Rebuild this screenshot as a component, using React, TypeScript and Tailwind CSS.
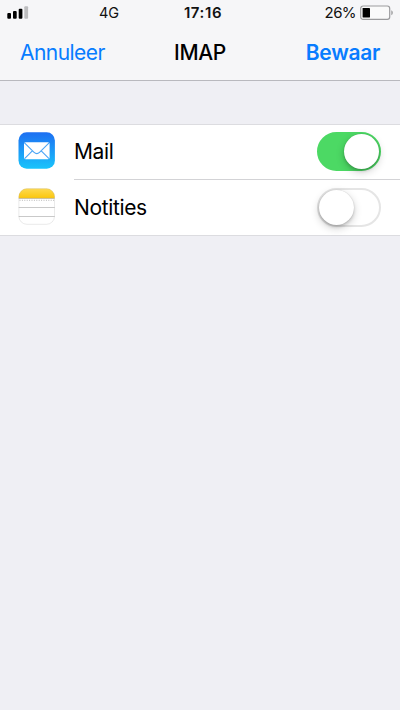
import React from "react";

function StatusBar() {
  return (
    <div className="grid h-[26px] grid-cols-3 items-center text-[15px] leading-[26px] text-[#111]">
      <div className="flex items-center pl-[7px]">
        <svg width="22" height="26" viewBox="0 0 22 26">
          <rect x="0.3" y="12.9" width="3.7" height="5.9" rx="1" fill="#000" />
          <rect x="6" y="11" width="3.7" height="7.8" rx="1" fill="#000" />
          <rect x="11.7" y="8.7" width="3.7" height="10.1" rx="1" fill="#000" />
          <rect x="17.3" y="6.2" width="3.8" height="12.6" rx="1" fill="#bcbcbe" />
        </svg>
        <span className="ml-[70px] text-[14.5px] tracking-[-0.2px]">4G</span>
      </div>
      <span className="pl-[6px] text-center font-semibold tracking-[0.6px]">17:16</span>
      <div className="flex items-center justify-end pr-[6px]">
        <span className="mr-[4px] tracking-[-0.6px]">26%</span>
        <svg width="34" height="26" viewBox="0 0 34 26">
          <rect x="0.7" y="6" width="29" height="13.3" rx="2.4" fill="#fafafa" stroke="#9b9b9d" strokeWidth="1.2" />
          <rect x="2.6" y="8" width="7.4" height="9.4" rx="0.4" fill="#000" />
          <path d="M31.3 10.3c2 .8 2 4.1 0 4.9z" fill="#9b9b9d" />
        </svg>
      </div>
    </div>
  );
}

function MailIcon() {
  return (
    <svg className="mb-[4px]" width="37" height="37" viewBox="0 0 37 37">
      <defs>
        <linearGradient id="mail" x1="0" y1="0" x2="0" y2="1">
          <stop offset="0" stopColor="#1d6ff2" />
          <stop offset="1" stopColor="#19c4fb" />
        </linearGradient>
      </defs>
      <rect x="0.5" y="0.3" width="36.4" height="36.4" rx="8.2" fill="url(#mail)" />
      <rect x="6" y="10.2" width="25.6" height="17" rx="1.6" fill="#fff" />
      <path d="M6.5 10.8l9.6 9.5q2.7 2.6 5.4 0l9.6-9.5M6.6 26.7l8-8M31 26.7l-8-8" fill="none" stroke="#4ba5f5" strokeWidth="1.1" />
    </svg>
  );
}

function NotesIcon() {
  return (
    <svg className="mb-[3px]" width="37" height="37" viewBox="0 0 37 37">
      <defs>
        <linearGradient id="notes" x1="0" y1="0" x2="0" y2="1">
          <stop offset="0" stopColor="#fedb55" />
          <stop offset="1" stopColor="#fbc70e" />
        </linearGradient>
        <clipPath id="tile"><rect x="0.7" y="0.5" width="36" height="36" rx="8.2" /></clipPath>
      </defs>
      <g clipPath="url(#tile)">
        <path fill="#fff" d="M0 0h37v37H0z" />
        <path fill="url(#notes)" d="M0 0h37v10H0z" />
        <path d="M0 10.4h37" stroke="#b9a978" strokeWidth="0.8" />
        <path d="M1.5 12.3h35" stroke="#b8b8b8" strokeWidth="1" strokeDasharray="1 1.4" />
        <path d="M0 19.5h37M0 28.5h37" stroke="#c9c9c9" strokeWidth="1" />
      </g>
      <rect x="0.9" y="0.7" width="35.6" height="35.6" rx="8" fill="none" stroke="#aaa" strokeOpacity="0.35" strokeWidth="0.7" />
    </svg>
  );
}

function Toggle({ on }: { on: boolean }) {
  return (
    <button
      role="switch"
      aria-checked={on}
      className={`flex h-[39px] w-[64px] items-center rounded-full border-2 ${on ? "mb-[2px] justify-end border-[#4cd964] bg-[#4cd964]" : "justify-start border-[#e5e5e5] bg-white"}`}
    >
      <span className="size-[35px] rounded-full bg-white shadow-[0_3px_8px_rgba(0,0,0,0.2),0_2px_3px_rgba(0,0,0,0.14),0_0_1px_rgba(0,0,0,0.2)]" />
    </button>
  );
}

export default function App() {
  return (
    <div className="h-[710px] w-[400px] overflow-hidden bg-[#efeff4] font-['Inter','Liberation_Sans',sans-serif] text-black">
      <header className="h-[81px] border-b border-[#b9b9be] bg-[#f6f6f8]">
        <StatusBar />
        <nav className="grid h-[54px] grid-cols-3 items-center px-[20px] text-[21px] leading-[54px]">
          <span className="text-left tracking-[-0.55px] text-[#087cff]">Annuleer</span>
          <span className="text-center font-[550] tracking-[-0.3px]">IMAP</span>
          <span className="text-right font-[560] tracking-[-0.3px] text-[#087cff]">Bewaar</span>
        </nav>
      </header>
      <main className="mt-[43px] border-y border-[#dcdce0] bg-white pl-[18px] text-[21px] tracking-[-0.35px]">
        <div className="flex h-[55px] items-center">
          <MailIcon />
          <div className="ml-[19px] flex h-[55px] flex-1 items-center justify-between border-b border-[#d3d3d6] pr-[19px]">
            <span>Mail</span>
            <Toggle on />
          </div>
        </div>
        <div className="flex h-[55px] items-center">
          <NotesIcon />
          <div className="ml-[19px] flex flex-1 items-center justify-between pr-[19px]">
            <span>Notities</span>
            <Toggle on={false} />
          </div>
        </div>
      </main>
    </div>
  );
}
